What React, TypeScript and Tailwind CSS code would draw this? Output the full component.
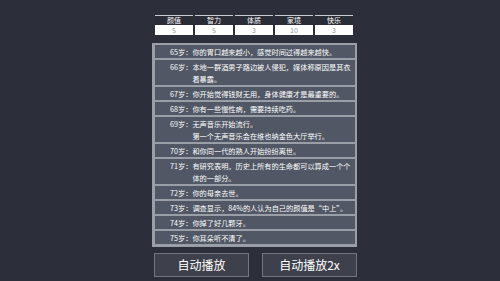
import React from 'react';

const stats: { label: string; value: number }[] = [
    { label: '颜值', value: 5 },
    { label: '智力', value: 5 },
    { label: '体质', value: 3 },
    { label: '家境', value: 10 },
    { label: '快乐', value: 3 },
];

const events: { age: number; lines: string[] }[] = [
    { age: 65, lines: ['你的胃口越来越小，感觉时间过得越来越快。'] },
    { age: 66, lines: ['本地一群酒男子路边被人侵犯，媒体称原因是其衣着暴露。'] },
    { age: 67, lines: ['你开始觉得钱财无用，身体健康才是最重要的。'] },
    { age: 68, lines: ['你有一些慢性病，需要持续吃药。'] },
    { age: 69, lines: ['无声音乐开始流行。', '第一个无声音乐会在维也纳金色大厅举行。'] },
    { age: 70, lines: ['和你同一代的熟人开始纷纷离世。'] },
    { age: 71, lines: ['有研究表明，历史上所有的生命都可以算成一个个体的一部分。'] },
    { age: 72, lines: ['你的母亲去世。'] },
    { age: 73, lines: ['调查显示，84%的人认为自己的颜值是“中上”。'] },
    { age: 74, lines: ['你掉了好几颗牙。'] },
    { age: 75, lines: ['你耳朵听不清了。'] },
];

export default function App() {
    return (
        <div
            className="w-[500px] h-[281px] overflow-hidden bg-[#2c2e39] pt-[15px] pl-[152px]"
            style={{ fontFamily: '"Noto Sans CJK SC", "Noto Sans", sans-serif' }}
        >
            <div className="w-[205px] flex flex-col">
                {/* 属性 */}
                <div className="flex gap-[2px] pl-[3px] pr-[4px]">
                    {stats.map((s) => (
                        <div key={s.label} className="flex-1 flex flex-col border-t border-[#c9cbd0]">
                            <div className="h-[9px] flex items-center justify-center bg-[#2a2c36] text-white text-[7px] leading-[9px] overflow-hidden">
                                {s.label}
                            </div>
                            <div className="h-[10px] flex items-center justify-center bg-white text-[#8f939a] text-[7px] leading-[10px] overflow-hidden">
                                {s.value}
                            </div>
                        </div>
                    ))}
                </div>

                {/* 人生经历 */}
                <div className="mt-[8px] bg-[#9a9ea6] pt-[2px] pb-[3px] pl-[3px] pr-[2px] flex flex-col gap-[2px]">
                    {events.map((e) => (
                        <div key={e.age} className="flex bg-[#515765] pl-[15px] pr-[2px] py-[0.5px] text-white text-[7.2px] leading-[12px]">
                            <span className="shrink-0">{e.age}岁：</span>
                            <span className="flex-1">
                                {e.lines.map((l, i) => (
                                    <React.Fragment key={i}>
                                        {i > 0 && <br />}
                                        {l}
                                    </React.Fragment>
                                ))}
                            </span>
                        </div>
                    ))}
                </div>

                {/* 按钮 */}
                <div className="mt-[6px] flex justify-between pl-[2px]">
                    <button className="w-[95px] h-[24px] bg-[#3e414b] border border-[#72757e] text-white text-[12px] leading-none">
                        自动播放
                    </button>
                    <button className="w-[95px] h-[24px] bg-[#3e414b] border border-[#72757e] text-white text-[12px] leading-none">
                        自动播放2x
                    </button>
                </div>
            </div>
        </div>
    );
}
